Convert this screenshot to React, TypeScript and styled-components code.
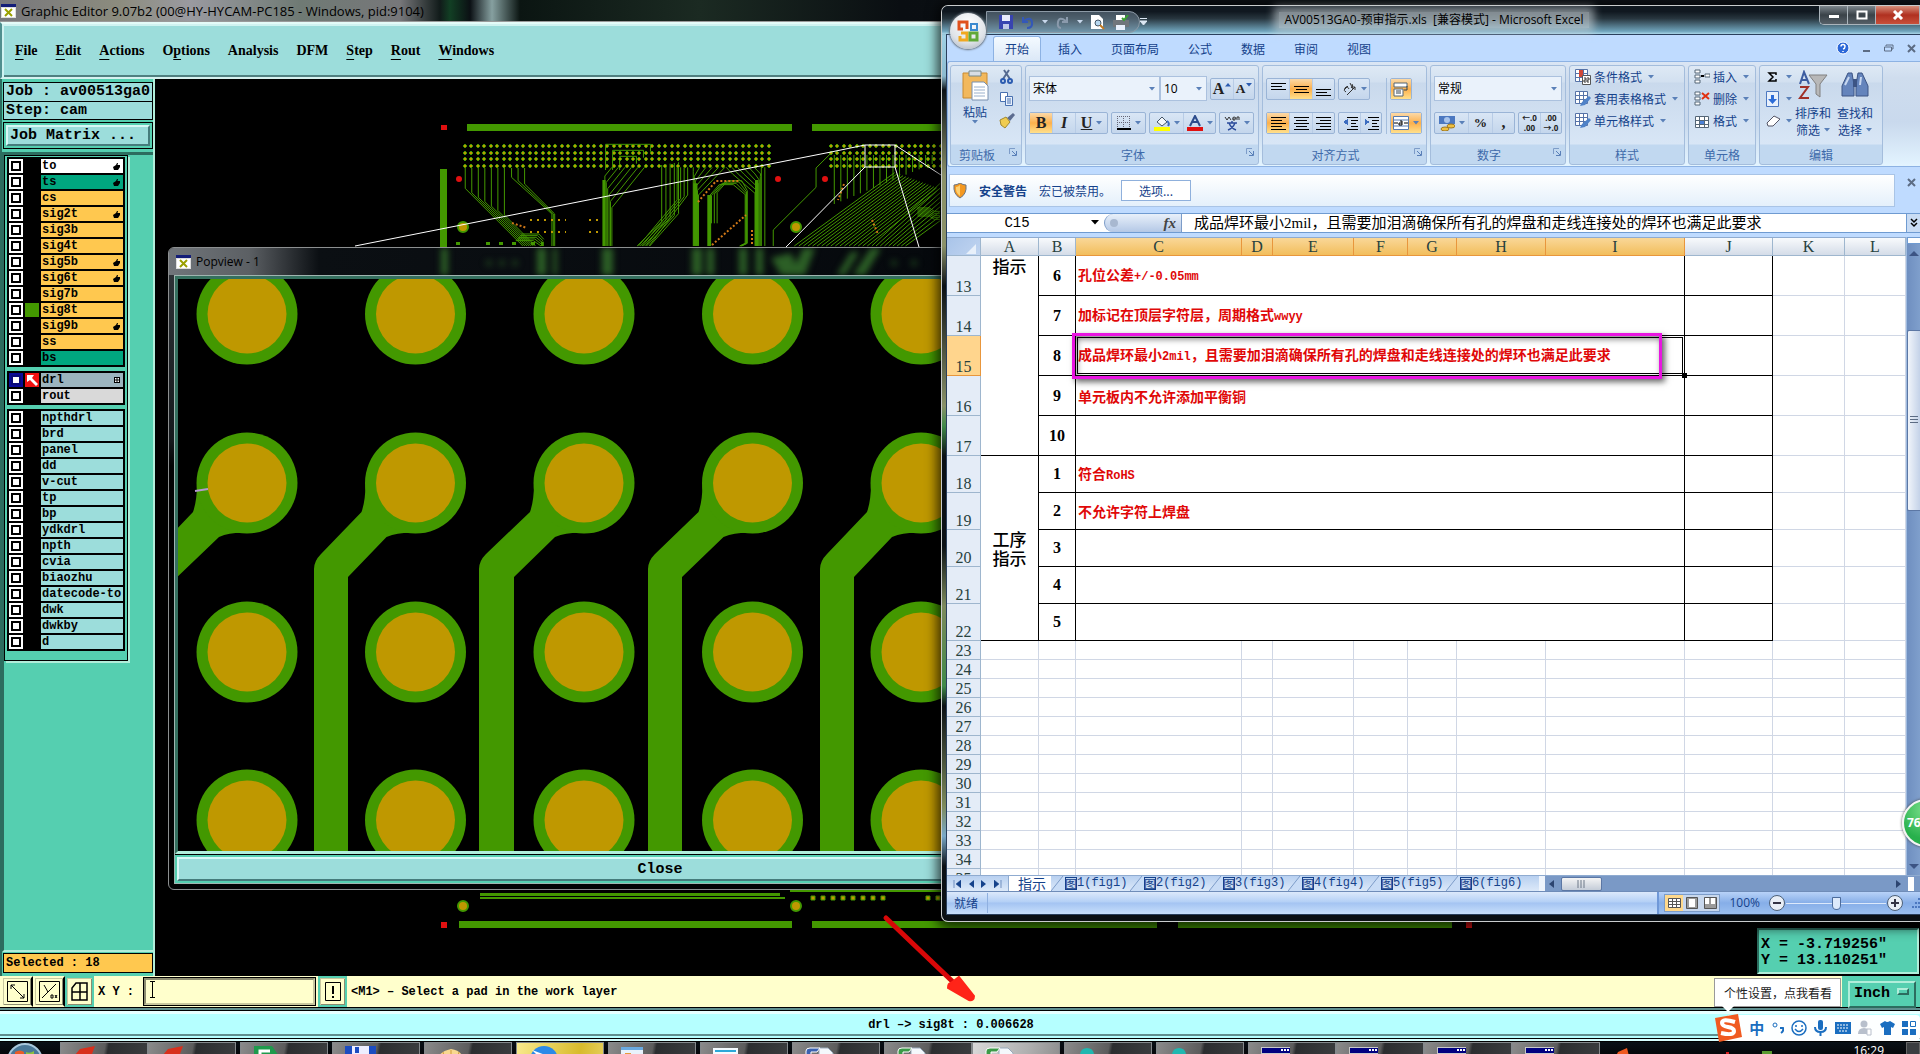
import React from "react";
import styled, { createGlobalStyle, css } from "styled-components";

const cjk = '"Noto Sans CJK SC", sans-serif';
const ui = `"Open Sans", ${cjk}`;
const mono = `"Liberation Mono", ${cjk}`;
const serif = `"Liberation Serif", ${cjk}`;

const green = "#439800";
const gold = "#bf9800";
const teal = "#55cfb0";
const aqua = "#9cdddb";

const Global = createGlobalStyle`
  *, *::before, *::after { box-sizing: border-box; }
  html, body { margin: 0; background: #000; overflow: hidden; }
  button, input, select { font: inherit; color: inherit; margin: 0; padding: 0; border: 0; background: none; border-radius: 0; outline: none; }
  button { display: flex; align-items: center; justify-content: center; }
  svg { display: block; flex: none; }
`;

const Desktop = styled.div`
  position: relative;
  display: flex;
  flex-direction: column;
  height: 100vh;
  overflow: hidden;
  background: #000;
  color: #000;
  font: 12px/16px ${ui};
`;

/* ---------- CAM editor ---------- */

const EditorTitle = styled.header`
  display: flex;
  align-items: center;
  gap: 5px;
  height: 22px;
  padding-left: 1px;
  border-bottom: 1px solid #9a9a9a;
  background: linear-gradient(90deg, #77777c 0, #8c8c7e 120px, #9a9aa0 190px, #6f7a74 300px, #77777a 400px, #111b1a 440px, #123f24 450px, #0b1014 470px, #86a0a0 492px, #0b1512 520px, #1b2a22 700px, #0a0e12 900px, #10151c);
  font-size: 13px;
`;
const MenuBar = styled.nav`
  display: flex;
  align-items: center;
  gap: 18px;
  height: 57px;
  padding-left: 13px;
  border: 2px solid;
  border-color: #e4fbf8 #4f8f8e #d6f2f0 #4f8f8e;
  background: ${aqua};
  box-shadow: inset 2px 2px #d0f3f1, inset 0 -2px #4f8080;
  font: bold 14px/18px ${serif};
  u { text-underline-offset: 4px; text-decoration-thickness: 1px; }
`;
const Workspace = styled.main`
  display: flex;
  flex: 1;
  min-height: 0;
`;
const Side = styled.aside`
  display: flex;
  flex-direction: column;
  width: 155px;
  border-left: 2px solid #2c6d5f;
  border-right: 2px solid #b0eeda;
  background: ${teal};
`;
const JobBox = styled.div`
  margin: 3px 0 0 1px;
  width: 150px;
  border: 1px solid #000;
  background: ${aqua};
  font: bold 15px/17px ${mono};
  white-space: nowrap;
  div { padding-left: 2px; height: 18px; }
  div + div { border-top: 1px solid #000; }
`;
const MatrixFrame = styled.div`
  margin: 2px 0 3px 1px;
  width: 150px;
  padding: 2px;
  border: 1px solid #000;
`;
const MatrixButton = styled.button`
  justify-content: flex-start;
  width: 144px;
  height: 21px;
  padding-left: 2px;
  border: 2px solid;
  border-color: #d8f8f6 #457c7c #457c7c #d8f8f6;
  background: ${aqua};
  font: bold 15px/17px ${mono};
`;
const LayerArea = styled.div`
  flex: 1;
  border-top: 3px solid #2c6d5f;
  border-left: 2px solid #2c6d5f;
  border-bottom: 2px solid #b0eeda;
`;
const LayerPanel = styled.div`
  display: flex;
  flex-direction: column;
  gap: 4px;
  width: 124px;
  padding: 1px 2px 9px 2px;
  border: 1px solid #000;
  box-shadow: 2px 2px #b0eeda;
`;
const LayerGroup = styled.div`
  display: flex;
  flex-direction: column;
  gap: 2px;
  padding: 2px;
  background: #000;
`;
const LayerRow = styled.label`
  display: grid;
  grid-template-columns: 14px 14px 1fr;
  gap: 2px;
  height: 14px;
`;
const Tick = styled.input`
  appearance: none;
  width: 14px;
  height: 14px;
  border: 2px solid #fff;
  background: #fff;
  box-shadow: inset 0 0 0 2px #000;
  &:checked { border-color: #0a0a98; box-shadow: inset 0 0 0 2px #0a0a78; }
`;
const Swatch = styled.span<{ $c?: string }>`
  background: ${(p) => p.$c || "#000"};
`;
const LayerName = styled.span<{ $c: string }>`
  display: flex;
  align-items: center;
  justify-content: space-between;
  padding-left: 1px;
  background: ${(p) => p.$c};
  font: bold 12px/14px ${mono};
  white-space: nowrap;
  svg { margin-right: 3px; }
`;
const Selected = styled.div`
  margin: 1px 0 3px 1px;
  width: 150px;
  height: 20px;
  padding-left: 2px;
  border: 1px solid #000;
  background: #ffc84f;
  font: bold 12px/18px ${mono};
`;
const Canvas = styled.section`
  position: relative;
  flex: 1;
  overflow: hidden;
  background: #000;
`;
const Coords = styled.div`
  position: absolute;
  right: 1px;
  bottom: 2px;
  width: 162px;
  height: 46px;
  padding: 7px 2px;
  border: 2px solid;
  border-color: #2c6d5f #b0eeda #b0eeda #2c6d5f;
  background: ${teal};
  font: bold 15px/16px ${mono};
  white-space: pre;
`;
const CommandBar = styled.div`
  display: flex;
  align-items: stretch;
  height: 32px;
  padding-left: 1px;
  background: #ffffcc;
  border-bottom: 1px solid #000;
  font: bold 12px/32px ${mono};
`;
const ToolButton = styled.button<{ $teal?: boolean }>`
  width: 32px;
  border: 2px solid ${(p) => (p.$teal ? teal : "#ffffcc")};
  border-right: 2px solid #000;
  background: #ffffcc;
  box-shadow: inset 1px 1px #c8c8a0, inset -1px -1px #8c8c70;
  ${(p) => p.$teal && css`border-right-color: ${teal}; width: 29px;`}
`;
const XYLabel = styled.label`
  width: 50px;
  padding-left: 4px;
`;
const XYInput = styled.input`
  width: 171px;
  margin: 2px 3px 2px 0;
  padding-left: 4px;
  border: 2px solid;
  border-color: #8c8c70 #c8c8a0 #c8c8a0 #8c8c70;
  outline: 1px solid #000;
`;
const XYField = styled.span`
  position: relative;
  display: flex;
  svg { position: absolute; left: 5px; top: 5px; }
`;
const Prompt = styled.span`
  flex: 1;
  padding-left: 4px;
`;
const UnitBox = styled.label`
  position: relative;
  width: 78px;
  padding: 2px 4px 2px 6px;
  background: ${teal};
`;
const Unit = styled.select`
  appearance: none;
  width: 68px;
  height: 27px;
  padding-left: 4px;
  border: 2px solid;
  border-color: #b0eeda #2c6d5f #2c6d5f #b0eeda;
  font: bold 15px/20px ${mono};
`;
const UnitMark = styled.i`
  position: absolute;
  right: 11px;
  top: 12px;
  width: 12px;
  height: 7px;
  border: 2px solid;
  border-color: #b0eeda #2c6d5f #2c6d5f #b0eeda;
`;
const StatusLine = styled.div`
  display: flex;
  align-items: center;
  justify-content: center;
  height: 33px;
  margin-bottom: 1px;
  padding-right: 18px;
  border-top: 2px solid #5f8f8f;
  border-bottom: 2px solid #d8ffff;
  background: #b5ffff;
  box-shadow: inset 0 1px #000, inset 0 4px #e6ffff, inset 0 -1px #000, inset 0 -3px #b5ffff, inset 0 -5px #5f8f8f;
  font: bold 12px/16px ${mono};
`;

/* ---------- Taskbar ---------- */

const Taskbar = styled.footer`
  display: flex;
  align-items: flex-start;
  gap: 4px;
  height: 12px;
  overflow: hidden;
  background: linear-gradient(#0a1016, #05070a);
`;
const StartButton = styled.button`
  width: 56px;
  height: 40px;
  align-items: flex-start;
  padding: 1px 6px 0 0;
`;
const TaskGroup = styled.div`
  display: flex;
`;
const Task = styled.button<{ $tone?: string }>`
  width: 88px;
  height: 40px;
  align-items: flex-start;
  justify-content: flex-start;
  padding: 3px 0 0 12px;
  border: 1px solid #85898c;
  background: ${(p) =>
    p.$tone === "yellow" ? "linear-gradient(100deg, #f8e98c, #d8bb2c 70%, #e6d060)"
    : p.$tone === "light" ? "linear-gradient(100deg, #d8d8d8, #b0b0b0 60%, #8c8c8c)"
    : "linear-gradient(100deg, #8a8a8a, #5c5c5c 48%, #2b2d2f 52%, #3c3e40)"};
`;
const Tray = styled.div`
  display: flex;
  flex: 1;
  align-items: flex-start;
  justify-content: flex-end;
  gap: 22px;
  color: #fff;
  font: 12px/16px ${ui};
  time { padding-top: 1px; }
  svg { margin: 6px auto 0 12px; }
`;
const ShowDesktop = styled.button`
  width: 14px;
  height: 40px;
  border: 1px solid #666;
  background: #3a3d40;
`;

/* ---------- Popview window ---------- */

const Popview = styled.section`
  position: absolute;
  left: 168px;
  top: 247px;
  width: 984px;
  height: 643px;
  display: flex;
  flex-direction: column;
  padding: 0 5px 5px;
  border: 1px solid #8c8f90;
  border-radius: 6px 6px 0 6px;
  background: linear-gradient(#30363a, #15191c 30%, #020303 34%);
  overflow: hidden;
`;
const PopTitle = styled.header`
  position: relative;
  display: flex;
  align-items: center;
  gap: 5px;
  height: 27px;
  background: linear-gradient(90deg, #70757a, #5c6064 80px, #0b0f13 150px, #04070b);
  margin: 0 -5px;
  padding-left: 7px;
`;
const PopGlow = styled.svg`
  position: absolute;
  inset: 0;
`;
const PopBody = styled.div`
  display: flex;
  flex: 1;
  flex-direction: column;
  border: 1px solid #9fb5b0;
  min-height: 0;
`;
const PopView = styled.div`
  flex: 1;
  min-height: 0;
  overflow: hidden;
  border: 3px solid;
  border-color: #35705f #b0eeda #b0eeda #35705f;
  background: #000;
`;
const CloseFrame = styled.div`
  padding: 2px;
  border-top: 1px solid #000;
  background: ${teal};
`;
const CloseButton = styled.button`
  width: 100%;
  height: 24px;
  padding-top: 1px;
  border: 2px solid;
  border-color: #d8f8f6 #457c7c #457c7c #d8f8f6;
  background: ${aqua};
  font: bold 15px/18px ${mono};
`;

/* ---------- Excel window ---------- */

const Excel = styled.section`
  position: absolute;
  left: 941px;
  right: 0;
  top: 5px;
  bottom: 132px;
  display: flex;
  flex-direction: column;
  padding: 0 0 6px 4px;
  border: 1px solid #c9cccd;
  border-right: 0;
  border-radius: 7px 0 0 7px;
  background: linear-gradient(#1a232b, #9fd0e4 30px, #8dbbd0 70px, #0b1014 84px, #8b9168 170px, #8b9168 240px, #0b1014 280px, #8a9168 400px, #408a48 420px, #0b1014 450px, #0b1014 540px, #7d8a5c 600px, #408a48 680px, #0b1014 700px, #7d8a5c 800px, #79a9c8 830px, #0b1014 860px);
  box-shadow: 0 2px 12px 4px rgba(0, 0, 0, 0.7);
`;
const XTitle = styled.header`
  position: relative;
  display: flex;
  flex: none;
  justify-content: center;
  height: 28px;
  margin-left: -4px;
  padding: 6px 0 0 6px;
  border-radius: 6px 0 0 0;
  background: linear-gradient(#101820 20%, #28363f 45%, #6fa3bb 90%, #a9d5e8);
  font-size: 12px;
`;
const XTitleText = styled.h1`
  margin: 0;
  height: 16px;
  padding: 0 6px;
  font: 12px/16px ${ui};
  white-space: pre;
  background: rgba(205, 215, 220, 0.6);
  box-shadow: 0 0 8px 5px rgba(205, 215, 220, 0.6);
`;
const Orb = styled.button`
  position: absolute;
  z-index: 2;
  left: 8px;
  top: 7px;
  width: 36px;
  height: 36px;
  border-radius: 50%;
  background: radial-gradient(circle at 50% 30%, #fff, #dfe3e8 60%, #a4adb8);
  box-shadow: 0 0 2px 1px #66707a;
`;
const Quick = styled.div`
  position: absolute;
  left: 44px;
  top: 5px;
  height: 22px;
  display: flex;
  align-items: center;
  gap: 8px;
  padding: 0 10px 0 12px;
  border: 1px solid #8d9aa6;
  border-radius: 0 11px 11px 0;
  background: rgba(110, 130, 145, 0.55);
`;
const QuickMore = styled.button`
  position: absolute;
  left: 198px;
  top: 12px;
`;
const Caption = styled.div`
  position: absolute;
  right: 0;
  top: 0;
  display: flex;
  height: 19px;
  border: 1px solid #aab4bb;
  border-width: 0 0 1px 1px;
  border-radius: 0 0 0 5px;
  overflow: hidden;
`;
const CapButton = styled.button<{ $close?: boolean }>`
  width: ${(p) => (p.$close ? 44 : 28)}px;
  border-right: 1px solid #aab4bb;
  background: ${(p) => (p.$close ? "linear-gradient(#d8907c, #b03020 50%, #c8503a)" : "linear-gradient(#7d868d, #3a4248 50%, #566068)")};
`;
const XBody = styled.div`
  display: flex;
  flex: 1;
  flex-direction: column;
  min-height: 0;
  border: 1px solid #2a3f5c;
  border-right: 0;
  background: #bfdbff;
`;
const Tabs = styled.nav`
  display: flex;
  flex: none;
  align-items: flex-end;
  gap: 5px;
  height: 26px;
  padding: 0 4px 0 46px;
`;
const Tab = styled.button<{ $on?: boolean }>`
  height: 25px;
  padding: 0 12px;
  color: #15428b;
  font: 12px/16px ${cjk};
  ${(p) => p.$on && css`
    border: 1px solid #8db2e3;
    border-bottom: 0;
    border-radius: 3px 3px 0 0;
    padding: 0 11px;
    background: linear-gradient(#f4faff, #dbe8f7);
  `}
`;
const MdiButtons = styled.div`
  display: flex;
  gap: 12px;
  align-items: center;
  height: 26px;
  margin-left: auto;
`;
const Ribbon = styled.div`
  display: flex;
  flex: none;
  gap: 3px;
  height: 106px;
  padding: 3px 2px 2px;
  border: 1px solid #8db2e3;
  border-right: 0;
  border-radius: 3px 0 0 3px;
  background: linear-gradient(#dbe6f4, #cfddee 16px, #c9d9ed 60px, #e3f4ff);
`;
const Group = styled.section<{ $w: number }>`
  display: flex;
  flex: none;
  flex-direction: column;
  width: ${(p) => p.$w}px;
  height: 100px;
  border: 1px solid #a4bddc;
  border-radius: 3px;
  background: linear-gradient(#dee9f5, #d2e0f0 16px, #c9d9ec 17px, #d8e6f6 78px, #c1d8f0 79px);
  color: #15428b;
`;
const GroupMain = styled.div<{ $pad?: string }>`
  display: flex;
  flex: 1;
  padding: ${(p) => p.$pad || "10px 3px 0"};
`;
const GroupName = styled.div<{ $launch?: boolean }>`
  position: relative;
  height: 19px;
  padding-right: ${(p) => (p.$launch ? 18 : 0)}px;
  text-align: center;
  color: #3e6aaa;
  font: 12px/19px ${cjk};
`;
const Launcher = styled.button`
  position: absolute;
  right: 4px;
  top: 3px;
`;
const Col = styled.div<{ $gap?: number }>`
  display: flex;
  flex-direction: column;
  gap: ${(p) => p.$gap ?? 0}px;
`;
const Row = styled.div<{ $gap?: number }>`
  display: flex;
  align-items: center;
  gap: ${(p) => p.$gap ?? 3}px;
`;
const Combo = styled.select<{ $w: number }>`
  appearance: none;
  width: ${(p) => p.$w}px;
  height: 25px;
  padding-left: 3px;
  border: 1px solid #abc1de;
  background: #eaf2fb;
  color: #000;
  font: 12px/16px ${ui};
`;
const ComboBox = styled.label`
  position: relative;
  display: block;
  svg { position: absolute; right: 5px; top: 11px; }
`;
const Segment = styled.div`
  display: flex;
  height: 22px;
  border: 1px solid #9ab4d6;
  border-radius: 2px;
  background: linear-gradient(#d9e6f5, #c4d6ec);
`;
const Seg = styled.button<{ $w: number; $on?: boolean }>`
  width: ${(p) => p.$w}px;
  gap: 4px;
  color: #222;
  font: bold 16px/18px ${serif};
  & + & { border-left: 1px solid #b8cce6; }
  ${(p) => p.$on && css`background: linear-gradient(#fbd9a8, #fcb04c 50%, #ffe08c);`}
`;
const Grower = styled.span`
  display: flex;
  align-items: flex-start;
  gap: 1px;
  svg { margin-top: 3px; }
`;
const Tool = styled.button<{ $h?: number }>`
  justify-content: flex-start;
  gap: 3px;
  height: ${(p) => p.$h ?? 22}px;
  color: #15428b;
  font: 12px/16px ${cjk};
  white-space: nowrap;
  svg + svg { margin-left: 3px; }
`;
const BigTool = styled.button<{ $w: number }>`
  flex-direction: column;
  justify-content: flex-start;
  width: ${(p) => p.$w}px;
  color: #15428b;
  font: 12px/17px ${cjk};
  span { display: flex; align-items: center; gap: 4px; white-space: nowrap; }
`;
const MessageRow = styled.div`
  display: flex;
  flex: none;
  gap: 7px;
  margin: 7px 0 6px 2px;
`;
const MessageBar = styled.div`
  display: flex;
  flex: 1;
  align-items: center;
  height: 33px;
  padding-left: 3px;
  border: 1px solid #a9c4e6;
  background: linear-gradient(#fff, #e4f0fb);
  color: #15428b;
  font: 12px/16px ${cjk};
  strong { margin: 0 12px; }
`;
const OptionsButton = styled.button`
  width: 70px;
  height: 21px;
  margin-left: 10px;
  border: 1px solid #8fb0dc;
  background: #fff;
`;
const CloseX = styled.button`
  width: 18px;
  height: 16px;
`;
const FormulaBar = styled.div`
  display: flex;
  flex: none;
  height: 20px;
  border: 1px solid #6f9bd1;
  border-width: 1px 0;
  background: #fff;
`;
const NameBox = styled.input`
  width: 140px;
  text-align: center;
  font: 14px/18px ${mono};
`;
const FxBox = styled.div`
  display: flex;
  align-items: center;
  justify-content: space-between;
  width: 78px;
  margin-left: 5px;
  padding: 0 5px 0 4px;
  border: 1px solid #7c9cc8;
  border-width: 0 1px 0 1px;
  border-radius: 9px 0 0 9px;
  background: linear-gradient(#e8f0fa, #b4c8e6);
  font: italic bold 15px/16px ${serif};
  color: #444;
`;
const Formula = styled.input`
  flex: 1;
  min-width: 0;
  padding-left: 12px;
  font: 15px/18px ${serif};
`;
const Expand = styled.button`
  width: 14px;
  border-left: 1px solid #6f9bd1;
  background: #c9dcf4;
`;
const SheetRow = styled.div`
  display: flex;
  flex: 1;
  min-height: 0;
  margin-top: 4px;
`;
const SheetView = styled.div`
  flex: 1;
  min-width: 0;
  overflow: hidden;
  background: #fff;
  border-top: 1px solid #8fabd0;
`;
const Sheet = styled.table`
  width: 100%;
  table-layout: fixed;
  border-collapse: separate;
  border-spacing: 0;
  font: 16px/18px ${serif};
  th, td { padding: 0; }
`;
const HeadCell = styled.th<{ $on?: boolean }>`
  height: 18px;
  border-right: 1px solid ${(p) => (p.$on ? "#e8963c" : "#9eb6ce")};
  border-bottom: 1px solid ${(p) => (p.$on ? "#e8963c" : "#9eb6ce")};
  background: ${(p) => (p.$on ? "linear-gradient(#f9d798, #f2be5c)" : "linear-gradient(#f8fafc, #d4dce8)")};
  color: #27413e;
  font-weight: normal;
  line-height: 17px;
`;
const Corner = styled(HeadCell)`
  background: linear-gradient(135deg, #a9c4e9, #c0d4f0);
  svg { margin: 4px 4px 0 auto; }
`;
const RowHead = styled.th<{ $on?: boolean; $h: number }>`
  height: ${(p) => p.$h}px;
  border-right: 1px solid ${(p) => (p.$on ? "#e8963c" : "#9eb6ce")};
  border-bottom: 1px solid ${(p) => (p.$on ? "#e8963c" : "#9eb6ce")};
  background: ${(p) => (p.$on ? "#ffd58d" : "#e4ecf7")};
  color: #27413e;
  font-weight: normal;
  line-height: 17px;
  vertical-align: bottom;
`;
const Cell = styled.td<{ $ink?: boolean }>`
  border-right: 1px solid ${(p) => (p.$ink ? "#000" : "#d0d7e5")};
  border-bottom: 1px solid ${(p) => (p.$ink ? "#000" : "#d0d7e5")};
`;
const Topic = styled(Cell)<{ $top?: boolean }>`
  text-align: center;
  vertical-align: ${(p) => (p.$top ? "top" : "middle")};
  font: 500 17px/19px ${cjk};
`;
const Num = styled(Cell)`
  text-align: center;
  font-weight: bold;
`;
const Note = styled(Cell)<{ $active?: boolean }>`
  position: relative;
  padding-left: 2px !important;
  color: #e00808;
  font: bold 14px/18px ${cjk};
  white-space: nowrap;
  ${(p) => p.$active && css`box-shadow: inset 0 0 0 1px #fff, inset 0 0 0 2px #000;`}
`;
const Latin = styled.span`
  font: bold 12px/18px ${mono};
`;
const Highlight = styled.div`
  position: absolute;
  left: -4px;
  top: -3px;
  right: 22px;
  bottom: -4px;
  border: 3px solid #e815e0;
  box-shadow: 3px 3px 6px rgba(0, 0, 0, 0.6), inset 2px 3px 6px rgba(0, 0, 0, 0.5);
`;
const Handle = styled.i`
  position: absolute;
  right: -3px;
  bottom: -3px;
  width: 5px;
  height: 5px;
  background: #000;
  outline: 1px dotted #fff;
`;
const VScroll = styled.div`
  display: flex;
  flex-direction: column;
  align-items: center;
  width: 14px;
  border-left: 1px solid #9fbbe0;
  background: linear-gradient(90deg, #6f8fc0, #7f9fcc);
`;
const SplitBox = styled.div`
  width: 14px;
  height: 7px;
  margin-bottom: 7px;
  border: 1px solid #6f9bd1;
  background: #fff;
`;
const VThumb = styled.div`
  display: flex;
  align-items: center;
  justify-content: center;
  width: 13px;
  height: 181px;
  margin: 73px 0 auto;
  border: 1px solid #5c77a4;
  border-right: 0;
  border-radius: 2px 0 0 2px;
  background: linear-gradient(90deg, #f0f4fa, #c4d2e8);
`;
const BottomBar = styled.div`
  display: flex;
  flex: none;
  height: 17px;
  border-top: 1px solid #8fabd0;
  border-bottom: 1px solid #6f8cb8;
  background: linear-gradient(#b8d0f0, #dce9f9);
`;
const SheetNav = styled.div`
  display: flex;
  align-items: center;
  justify-content: space-around;
  width: 62px;
  padding: 0 2px;
  border-right: 1px solid #8fabd0;
`;
const ActiveSheet = styled.button`
  width: 42px;
  padding-left: 4px;
  background: #fff;
  color: #15428b;
  font: 14px/15px ${cjk};
`;
const SheetTab = styled.button`
  flex: 1;
  justify-content: flex-start;
  color: #15428b;
  font: 12px/15px ${cjk};
  span { font: 12px/15px ${mono}; }
  b { font-weight: normal; border: 1px solid #15428b; height: 13px; width: 12px; display: flex; align-items: center; justify-content: center; }
`;
const SheetTabBox = styled.div`
  display: flex;
  width: 79px;
  &:last-of-type { width: 64px; }
`;
const HScroll = styled.div`
  display: flex;
  flex: 1;
  align-items: center;
  padding: 0 4px;
  border-left: 6px solid #eef4fc;
  background: #7a99c6;
`;
const HThumb = styled.div`
  display: flex;
  align-items: center;
  justify-content: center;
  width: 41px;
  height: 14px;
  margin: 0 auto 0 6px;
  border: 1px solid #5c77a4;
  border-radius: 2px;
  background: linear-gradient(#f4f4f4, #c4ccd8);
`;
const XStatus = styled.footer`
  display: flex;
  flex: none;
  align-items: center;
  height: 22px;
  background: linear-gradient(#dce9fb, #b4d0f6 45%, #a4c4f2 50%, #c8dffb);
  color: #15428b;
  font: 12px/16px ${cjk};
`;
const Ready = styled.span`
  width: 41px;
  height: 20px;
  padding-left: 7px;
  line-height: 20px;
  border-right: 1px solid #8fb0e0;
  margin-right: auto;
`;
const ViewTools = styled.div`
  display: flex;
  align-items: center;
  height: 22px;
  padding-left: 5px;
  gap: 9px;
  border-left: 2px solid #6f98d8;
  background: linear-gradient(#b8d2f8, #86aee8 50%, #9cc0f0);
  font-family: ${ui};
`;
const Views = styled.div`
  display: flex;
  height: 18px;
  border: 1px solid #7c9cc8;
`;
const ViewButton = styled.button<{ $on?: boolean }>`
  width: 18px;
  background: ${(p) => (p.$on ? "#ffd98c" : "#c8d8ee")};
`;
const Zoom = styled.input`
  appearance: none;
  width: 100px;
  height: 16px;
  background: linear-gradient(#dce9fb, #dce9fb) center / 100% 1px no-repeat;
  &::-webkit-slider-thumb {
    appearance: none;
    width: 9px;
    height: 13px;
    border: 1px solid #4c6c9c;
    border-radius: 1px 1px 5px 5px;
    background: #dce9fb;
  }
`;
const RoundButton = styled.button`
  width: 16px;
  height: 16px;
  border: 1px solid #4c6078;
  border-radius: 50%;
  background: #e8eef6;
`;

/* ---------- Overlays ---------- */

const Ball = styled.div`
  position: absolute;
  right: -30px;
  top: 799px;
  width: 48px;
  height: 48px;
  padding-left: 3px;
  border: 2px solid #f4f4f4;
  border-radius: 50%;
  background: radial-gradient(circle at 50% 20%, #7ce08c, #28b04c 70%);
  box-shadow: 0 0 3px #444;
  color: #fff;
  font: bold 12px/44px ${ui};
`;
const Arrow = styled.svg`
  position: absolute;
  left: 880px;
  top: 910px;
`;
const Tip = styled.div`
  position: absolute;
  right: 79px;
  bottom: 47px;
  width: 127px;
  height: 29px;
  padding-left: 9px;
  border: 1px solid #9a9a9a;
  background: #fff;
  color: #222;
  font: 12px/27px ${cjk};
  &::after {
    content: "";
    position: absolute;
    left: 7px;
    top: 27px;
    border: 6px solid transparent;
    border-top: 6px solid #fff;
    border-bottom: 0;
  }
`;
const Ime = styled.div`
  position: absolute;
  right: 0;
  bottom: 13px;
  display: flex;
  align-items: center;
  justify-content: space-between;
  width: 206px;
  height: 26px;
  padding-right: 4px;
  border-radius: 4px;
  background: linear-gradient(90deg, transparent 14px, #fdffff 14px);
  color: #1a6ec0;
  font: bold 15px/20px ${cjk};
`;

const Caret = ({ c = "#5a80b8" }) => (
  <svg width="6" height="4"><path d="M0 0h6L3 3.5z" fill={c} /></svg>
);
const CaretUp = () => (
  <svg width="6" height="4"><path d="M0 3.500h6L3 0z" fill="#2c5cb0" /></svg>
);
const Dialog = () => (
  <svg width="8" height="8"><path d="M.5 6V.5H6" stroke="#7d9cc8" fill="none" /><path d="M3 3l4 4M7.500 3v4.500H3" stroke="#5a80b8" fill="none" /></svg>
);
const AppIcon = () => (
  <svg width="15" height="14"><path d="M0 0h15v14H0z" fill="#ddd" /><path d="M0 0h15v3H0z" fill="#131d78" /><path d="M1 4h13v9H1z" fill="#fff" /><path d="M4 5l7 7M11 5l-7 7" stroke="#9aa000" strokeWidth="2" /></svg>
);
const Hand = () => (
  <svg width="7" height="8"><path d="M0 5l3-2 1-2h1l-.5 2H7v2L5 8H1z" fill="#000" /></svg>
);
const DrillMark = () => (
  <svg width="6" height="6"><path d="M0 0h6v6H0z" /><path d="M1 1h1.500v1.500H1zM3.500 1H5v1.500H3.500zM1 3.500h1.500V5H1zM3.500 3.500H5V5H3.500z" fill="#fff" /></svg>
);
const Lines = ({ w, y = 2, off = 0 }: { w: number[]; y?: number; off?: 0 | 1 | 2 }) => (
  <svg width="15" height="15" shapeRendering="crispEdges">
    {w.map((n, i) => (
      <path key={i} d={`M${off === 0 ? 0 : off === 1 ? (15 - n) / 2 : 15 - n} ${y + i * 3 + 0.5}h${n}`} stroke="#000" strokeWidth="1.500" />
    ))}
  </svg>
);
const Grid = ({ badge = "#4f82c8" }) => (
  <svg width="16" height="16"><path d="M.5.5h12v12H.5z" fill="#fff" stroke="#5673a8" /><path d="M.5 4.500h12M.5 8.500h12M4.500.5v12M8.500.5v12" stroke="#5673a8" /><path d="M7 11l7-6 2 2-6 7-5 1z" fill={badge} /></svg>
);
const CondGrid = () => (
  <svg width="16" height="16"><path d="M.5.5h12v12H.5z" fill="#fff" stroke="#5673a8" /><path d="M.5 4.500h12M.5 8.500h12M4.500.5v12M8.500.5v12" stroke="#5673a8" /><path d="M4 1h4v7H4z" fill="#d04838" /><path d="M7.500 6.500h8v9h-8z" fill="#fff" stroke="#555" /><path d="M9 9h2v2H9v2h2M12 9h2v2h-2v2h2" stroke="#333" fill="none" /></svg>
);

/* ---------- PCB drawing ---------- */

const range = (n: number) => Array.from({ length: n }, (_, i) => i);

function padGrid(x0: number, x1: number) {
  const out: React.ReactNode[] = [];
  [146, 153, 159, 166].forEach((y) => {
    for (let k = 0; x0 + k * 6.46 <= x1; k++) {
      const x = Math.round(x0 + k * 6.46);
      out.push(<path key={`${x}-${y}`} d={`M${x - 2} ${y - 1}h4v2h-4zM${x - 1} ${y - 2}h2v4h-2z`} fill={green} />);
      out.push(<path key={`g${x}-${y}`} d={`M${x - 1} ${y - 1}h2v2h-2z`} fill={gold} />);
    }
  });
  return out;
}

function traces(): string[] {
  const p: string[] = [];
  range(7).forEach((i) => {
    const x = 186 + 18.6 * i;
    const y = (x + 123 - 6 * i) / 0.95;
    p.push(`M${x} 264V${y}L${x + (498 - y) * 0.95} 498`);
  });
  range(3).forEach((i) => p.push(`M${318 + 18.6 * i} 264V${292 + 10 * i}L${433 + 4 * i} 402V498`));
  range(5).forEach((i) => p.push(`M${330 + i * 4} ${482 - i * 5}h50l${22 - i * 2} 16`));
  range(6).forEach((i) => p.push(`M${604 + 18.6 * i} ${262}L${584 + i * 4} ${288 + i * 19}V498`));
  range(3).forEach((i) => p.push(`M${586 + 20 * i} 270V${193 + 18 * i}H${714 - 20 * i}v22`));
  range(5).forEach((i) => p.push(`M${746 + i * 12} ${255 - i * 2}V${425 - i * 6}L${676 + i * 9} 498`));
  range(4).forEach((i) => p.push(`M${790 + i * 10} 262V${360 - i * 5}L${680 + i * 10} 498`));
  range(6).forEach((i) => p.push(`M${836 + i * 18} 262L${836 + i * 3} ${275 + i * 14}V498`));
  range(6).forEach((i) => p.push(`M${930 + i * 16} 262l${18} ${20}L${1012 + i * 3} ${340 - i * 10}V498`));
  range(4).forEach((i) => p.push(`M${880 + i * 8} 430V${350 - i * 4}l30-36h40l${34 - i * 6} 30V490l-16 8`));
  p.push("M1228 220L1186 264V322L1064 450V498", "M1030 262V498", "M1040 262V498");
  range(16).forEach((i) => p.push(`M${1238 + i * 18.6} 225V${372 - i * 8}`));
  range(17).forEach((i) => p.push(`M${1410 + i * 8} ${278 + i * 3}L${1124 + i * 13} 498`));
  range(9).forEach((i) => p.push(`M1540 ${310 + i * 14}L${1345 + i * 12} 498`));
  range(5).forEach((i) => p.push(`M1475 ${384 + i * 6}h34l14 ${10}h16`));
  return p;
}

const Board = () => (
  <svg width="100%" height="100%">
    <g transform="translate(-155 -79)">
      <g fill={green}>
        <path d="M467 124h325v7H467zM812 124h300v7H812zM440 169h7v700h-7z" />
        <path d="M459 921h333v7H459zM812 921h345v7H812zM1178 921h274v7h-274z" />
        <path d="M480 893h300v3H480zM480 897h305v2H480zM790 890h151v2H790z" />
      </g>
      <g transform="translate(400 80) scale(.3508 .3333)" fill="none" stroke={green}>
        {traces().map((d, i) => <path key={i} d={d} vectorEffect="non-scaling-stroke" />)}
        <path d="M577 300h9v198h-9zM836 310h12v188h-12zM876 345h11v153h-11zM1012 300h10v198h-10zM402 485h8v13h-8z" fill={green} stroke="none" />
      </g>
      {padGrid(465, 772)}
      {padGrid(831, 941)}
      <g stroke="#d07818" strokeWidth="2" strokeDasharray="2 2" fill="none">
        <path d="M698 202l18-21h24M712 245l34-30M512 223l15 5M752 230v16M844 184l-6 16M872 220l6 14" />
        <path d="M530 220h36M530 232h36M589 220h10M589 232h10" stroke={gold} strokeDasharray="2 5" />
      </g>
      <g fill="#e01010">
        <path d="M441 125h6v5h-6zM441 922h6v6h-6zM1466 922h6v6h-6z" />
        <circle cx="459" cy="179" r="3" /><circle cx="778" cy="179" r="3" /><circle cx="825" cy="179" r="3" />
      </g>
      <g fill={gold} stroke={green} strokeWidth="2">
        <circle cx="463" cy="227" r="5" /><circle cx="796" cy="227" r="5" />
        <circle cx="463" cy="906" r="5" /><circle cx="796" cy="906" r="5" />
      </g>
      {[458, 488, 501, 514, 533].map((x) => <path key={x} d={`M${x - 2} 242h4v3h-4z`} fill={green} />)}
      {[812, 822, 832, 842, 852, 862, 872, 882, 927, 937].map((x) => (
        <path key={x} d={`M${x - 1} 896h4v4h-4z`} fill={gold} stroke={green} />
      ))}
      <path d="M355 246L831 152L865 145H895L941 175M865 145V167H895V145M865 167L786 247M895 167L919 247" fill="none" stroke="#fff" />
    </g>
  </svg>
);

const bends = [
  { l: 314, r: 348 }, { l: 479, r: 514 }, { l: 648, r: 682 }, { l: 820, r: 854 }, { l: 988, r: 1022 },
];
const CloseUp = () => (
  <svg width="100%" height="100%">
    <g transform="translate(-178 -278)">
      {bends.map((b, i) => {
        const cx = 247 + 168.5 * (i + 1);
        return (
          <path key={i} fill={green}
            d={`M${b.l} 860V568Q${b.l} 560 ${b.l + 7} 553L${cx - 54} 511Q${cx - 50} 500 ${cx - 50} 482H${cx}V532Q${cx - 16} 531 ${cx - 29} 536L${b.r} 576V860z`} />
        );
      })}
      <path d="M170 535L193 511Q197 500 197 482H247V532Q231 531 219 536L170 583z" fill={green} />
      {[313, 482, 651, 819].map((y) => range(6).map((i) => (
        <g key={`${y}-${i}`}>
          <circle cx={247 + 168.5 * i} cy={y} r="50.500" fill={green} />
          <circle cx={247 + 168.5 * i} cy={y} r="39.500" fill={gold} />
        </g>
      )))}
      <path d="M195 490l13-2" stroke="#b59ad0" strokeWidth="2" />
    </g>
  </svg>
);

/* ---------- Data ---------- */

type Layer = { n: string; c: string; hand?: boolean; sw?: string };
const amber = "#ffc84f";
const layerGroups: Layer[][] = [
  [
    { n: "to", c: "#fff", hand: true }, { n: "ts", c: "#00a67f", hand: true }, { n: "cs", c: amber },
    { n: "sig2t", c: amber, hand: true }, { n: "sig3b", c: amber }, { n: "sig4t", c: amber },
    { n: "sig5b", c: amber, hand: true }, { n: "sig6t", c: amber, hand: true }, { n: "sig7b", c: amber },
    { n: "sig8t", c: amber, sw: green }, { n: "sig9b", c: amber, hand: true }, { n: "ss", c: amber }, { n: "bs", c: "#00a67f" },
  ],
  [{ n: "drl", c: "#9cb4be", sw: "#f01010" }, { n: "rout", c: "#d9d9d9" }],
  ["npthdrl", "brd", "panel", "dd", "v-cut", "tp", "bp", "ydkdrl", "npth", "cvia", "biaozhu", "datecode-to", "dwk", "dwkby", "d"].map((n) => ({ n, c: aqua })),
];

const menus = ["_File", "_Edit", "_Actions", "O_ptions", "Analysis", "DFM", "_Step", "_Rout", "_Windows"];
const columns: [string, number][] = [["A", 58], ["B", 37], ["C", 166], ["D", 31], ["E", 81], ["F", 54], ["G", 49], ["H", 89], ["I", 139], ["J", 88], ["K", 72], ["L", 72]];
const requirement = "成品焊环最小2mil，且需要加泪滴确保所有孔的焊盘和走线连接处的焊环也满足此要求";
const rows: { r: number; h: number; n: string; t: string; topic?: [string, number] }[] = [
  { r: 13, h: 40, n: "6", t: "孔位公差+/-0.05mm", topic: ["指示", 5] },
  { r: 14, h: 40, n: "7", t: "加标记在顶层字符层，周期格式wwyy" },
  { r: 15, h: 40, n: "8", t: requirement },
  { r: 16, h: 40, n: "9", t: "单元板内不允许添加平衡铜" },
  { r: 17, h: 40, n: "10", t: "" },
  { r: 18, h: 37, n: "1", t: "符合RoHS", topic: ["工序\n指示", 5] },
  { r: 19, h: 37, n: "2", t: "不允许字符上焊盘" },
  { r: 20, h: 37, n: "3", t: "" },
  { r: 21, h: 37, n: "4", t: "" },
  { r: 22, h: 37, n: "5", t: "" },
];

const Mixed = ({ text }: { text: string }) => (
  <>{text.split(/([ -~]+)/).map((s, i) => (i % 2 ? <Latin key={i}>{s}</Latin> : s))}</>
);

const DocIcon = ({ c }: { c: string }) => (
  <svg width="30" height="16"><path d="M14 2h9l5 5v9H14z" fill="#f4f8fc" stroke="#9ab" /><path d="M1 14V5q0-3 4-3h10l-3 4H6v8z" fill={c} stroke="#fff" /></svg>
);
const ConsoleIcon = () => (
  <svg width="32" height="14"><path d="M0 1h29v13H0z" fill="#c8c8c8" /><path d="M1 2h28v5H1z" fill="#000080" /><path d="M20 3h2v2h-2zM23 3h2v2h-2zM26 3h2v2h-2z" fill="#fff" /></svg>
);
const RedIcon = () => (
  <svg width="26" height="14"><path d="M2 9l5-6 15-3-3 8-10 1-2 5H0z" fill="#d8301c" /></svg>
);
const FaceIcon = () => (
  <svg width="30" height="14"><path d="M3 8q1-6 7-6t7 6v6H3z" fill="#20b8b0" /><path d="M10 8h18v6H12z" fill="#0c6a80" /></svg>
);

const taskGroups: { tone?: string; icon: React.ReactNode }[][] = [
  [{ icon: <RedIcon /> }, { icon: <RedIcon /> }],
  [{ icon: <svg width="28" height="14"><path d="M1 0h18l7 10v4H1z" fill="#1f9a4c" /><path d="M7 14V5h10" stroke="#fff" strokeWidth="3" fill="none" /></svg> }],
  [{ icon: <svg width="32" height="14"><path d="M0 0h31v14H0z" fill="#1c4cc0" /><path d="M7 0h17v9H7z" fill="#eef" /><path d="M10 1h4v6h-4z" fill="#1c4cc0" /></svg> }],
  [{ icon: <svg width="28" height="14"><path d="M1 14q0-8 13-11 12 2 12 11z" fill="#f8d890" /><path d="M8 14L6 6M14 14V4M20 14l2-8" stroke="#d09838" /></svg> }],
  [{ tone: "yellow", icon: <svg width="32" height="14"><circle cx="15" cy="14" r="14" fill="#2c8ae8" /><path d="M3 4l16 6-6 4z" fill="#fff" /></svg> }],
  [{ icon: <svg width="24" height="14"><path d="M0 1h22v13H0z" fill="#e8f2fc" /><path d="M0 1h22v3H0z" fill="#6aaae0" /><path d="M4 7h6v6H4z" fill="#e89a3c" /></svg> }],
  [{ icon: <svg width="26" height="14"><path d="M0 2h25v12H0z" fill="#f4fbff" /><path d="M2 5h21M2 9h21" stroke="#2ca8d8" strokeWidth="2" /></svg> }],
  [{ icon: <DocIcon c="#3c62b0" /> }],
  [{ icon: <DocIcon c="#3c9a48" /> }, { tone: "light", icon: <DocIcon c="#3c9a48" /> }],
  [{ icon: <FaceIcon /> }],
  [{ icon: <FaceIcon /> }],
  [{ icon: <ConsoleIcon /> }, { icon: <ConsoleIcon /> }, { icon: <ConsoleIcon /> }, { icon: <ConsoleIcon /> }],
];

/* ---------- Views ---------- */

const Wraps = styled.div`
  display: flex;
  flex-direction: column;
  align-items: flex-start;
  gap: 12px;
  height: 56px;
  margin-left: 4px;
  padding-left: 3px;
  border-left: 1px solid #a4bddc;
`;
const Decimals = styled(Seg)`
  font: bold 8px/10px ${ui};
`;
const Finds = styled.div`
  display: flex;
  padding-top: 4px;
`;

function RibbonGroups() {
  return (
    <Ribbon>
      <Group $w={72}>
        <GroupMain $pad="3px 3px 0 8px">
          <BigTool $w={32}>
            <svg width="28" height="34"><path d="M2 4h24v25H2z" fill="#f2b85c" stroke="#c88a30" /><path d="M8 2h12v5H8z" fill="#d8dde4" stroke="#788" /><path d="M11 13h12l4 4v14H11z" fill="#fff" stroke="#7890b0" /><path d="M13 18h11M13 21h11M13 24h11M13 27h11" stroke="#9ab0cc" /></svg>
            <span>粘贴</span>
            <span><Caret /></span>
          </BigTool>
          <Col $gap={6}>
            <Tool aria-label="Cut" $h={16}><svg width="26" height="16"><path d="M13 1l6 9M18 1l-6 9" stroke="#556a90" strokeWidth="2" /><circle cx="12" cy="12" r="2" fill="none" stroke="#2c5cb0" strokeWidth="2" /><circle cx="19" cy="12" r="2" fill="none" stroke="#2c5cb0" strokeWidth="2" /></svg></Tool>
            <Tool aria-label="Copy" $h={16}><svg width="26" height="16"><path d="M9.500 1.500h7v9h-7z" fill="#fff" stroke="#4870b0" /><path d="M14.500 5.500h7v9h-7z" fill="#e8f0fc" stroke="#4870b0" /><path d="M16 8h4M16 10h4M16 12h4" stroke="#4870b0" /></svg></Tool>
            <Tool aria-label="Format painter" $h={16}><svg width="26" height="16"><path d="M16 5l6-5 2 2-5 6z" fill="#5c6c90" /><path d="M9 7l6-3 4 5-5 6-4-3z" fill="#f0cc50" stroke="#a08830" /></svg></Tool>
          </Col>
        </GroupMain>
        <GroupName $launch>剪贴板<Launcher aria-label="Clipboard"><Dialog /></Launcher></GroupName>
      </Group>

      <Group $w={234}>
        <GroupMain>
          <Col $gap={11}>
            <Row>
              <Row $gap={0}>
                <ComboBox><Combo $w={131} aria-label="Font"><option>宋体</option></Combo><Caret /></ComboBox>
                <ComboBox><Combo $w={47} aria-label="Font size"><option>10</option></Combo><Caret /></ComboBox>
              </Row>
              <Segment><Seg $w={22}><Grower>A<CaretUp /></Grower></Seg><Seg $w={21}><Grower><small>A</small><Caret c="#2c5cb0" /></Grower></Seg></Segment>
            </Row>
            <Row>
              <Segment><Seg $w={22} $on>B</Seg><Seg $w={23}><i>I</i></Seg><Seg $w={32}><u>U</u><Caret /></Seg></Segment>
              <Segment><Seg $w={33} aria-label="Borders"><svg width="14" height="14"><path d="M.5 0v12M6.500 0v12M12.500 0v12M0 .5h13M0 6.500h13" stroke="#667" strokeDasharray="1 1" /><path d="M0 13h14" stroke="#000" strokeWidth="2" /></svg><Caret /></Seg></Segment>
              <Segment>
                <Seg $w={33} aria-label="Fill"><svg width="16" height="16"><path d="M3 7l5-5 5 5-5 4z" fill="#f4f8fc" stroke="#456" /><path d="M13 6q3 2 1 5" stroke="#3c6cc0" strokeWidth="2" fill="none" /><path d="M0 12h16v4H0z" fill="#ff0" /></svg><Caret /></Seg>
                <Seg $w={32} aria-label="Font colour"><svg width="16" height="16"><path d="M3 11L8 1l5 10M5 7h6" stroke="#2c4c8c" strokeWidth="2" fill="none" /><path d="M0 12h16v4H0z" fill="#e01010" /></svg><Caret /></Seg>
              </Segment>
              <Segment><Seg $w={33} aria-label="Phonetic"><svg width="16" height="18"><path d="M1 3l2 3 2-3 2 3M9 5h3q0-2-2-2t-1 3h2M13 6V3h2v3" stroke="#333" fill="none" /><path d="M3 9h10M8 7v2M5 9q2 5 7 7M11 9q-2 5-7 7" stroke="#2c4c9c" strokeWidth="1.500" fill="none" /></svg><Caret /></Seg></Segment>
            </Row>
          </Col>
        </GroupMain>
        <GroupName $launch>字体<Launcher aria-label="Font settings"><Dialog /></Launcher></GroupName>
      </Group>

      <Group $w={165}>
        <GroupMain $pad="12px 3px 0">
          <Col $gap={12}>
            <Row>
              <Segment><Seg $w={22} aria-label="Top"><Lines w={[15, 11, 15]} y={1} /></Seg><Seg $w={23} $on aria-label="Middle"><Lines w={[15, 11, 15]} y={4} off={1} /></Seg><Seg $w={22} aria-label="Bottom"><Lines w={[15, 11, 15]} y={7} /></Seg></Segment>
              <Segment><Seg $w={30} aria-label="Orientation"><svg width="15" height="14"><path d="M2 8l4-4M4 10q-3-1-1-4t4 1M8 1l3 6M9 6q3-2 1-4M5 13l8-8M10 5h3v3" stroke="#333" fill="none" /></svg><Caret /></Seg></Segment>
            </Row>
            <Row>
              <Segment><Seg $w={22} $on aria-label="Left"><Lines w={[15, 11, 15, 11, 15]} y={1} /></Seg><Seg $w={23} aria-label="Centre"><Lines w={[15, 11, 15, 11, 15]} y={1} off={1} /></Seg><Seg $w={22} aria-label="Right"><Lines w={[15, 11, 15, 11, 15]} y={1} off={2} /></Seg></Segment>
              <Segment>
                <Seg $w={21} aria-label="Decrease indent"><svg width="16" height="14" shapeRendering="crispEdges"><path d="M5 1h11M9 4h7M9 7h5M9 10h7M5 13h11" stroke="#000" /><path d="M6 3v6L1 6z" fill="#3c6cc0" /></svg></Seg>
                <Seg $w={21} aria-label="Increase indent"><svg width="16" height="14" shapeRendering="crispEdges"><path d="M5 1h11M9 4h7M9 7h5M9 10h7M5 13h11" stroke="#000" /><path d="M2 3v6l5-3z" fill="#3c6cc0" /></svg></Seg>
              </Segment>
            </Row>
          </Col>
          <Wraps>
            <Segment><Seg $w={20} $on aria-label="Wrap text"><svg width="16" height="16"><path d="M1 2h13v4H1zM1 8h9v7H1z" fill="#fff" stroke="#567" /><path d="M14 5v4h-3M3 10h5M3 12h5" stroke="#345" fill="none" /></svg></Seg></Segment>
            <Segment><Seg $w={30} $on aria-label="Merge"><svg width="16" height="14"><path d="M.5.5h15v13H.5z" fill="#fff" stroke="#567ab0" /><path d="M0 4h16M0 10h16" stroke="#567ab0" /><path d="M1 7h4M11 7h4" stroke="#000" /><path d="M7 5h2v4H6V7h3" stroke="#000" fill="none" /></svg><Caret /></Seg></Segment>
          </Wraps>
        </GroupMain>
        <GroupName $launch>对齐方式<Launcher aria-label="Alignment"><Dialog /></Launcher></GroupName>
      </Group>

      <Group $w={136}>
        <GroupMain>
          <Col $gap={11}>
            <ComboBox><Combo $w={128} aria-label="Number format"><option>常规</option></Combo><Caret /></ComboBox>
            <Row>
              <Segment>
                <Seg $w={33} aria-label="Currency"><svg width="16" height="16"><path d="M0 1h16v8H0z" fill="#4c78c0" /><circle cx="8" cy="5" r="3" fill="#a8c4ec" /><ellipse cx="12" cy="11" rx="4" ry="2" fill="#f0c040" stroke="#a07820" /><ellipse cx="6" cy="14" rx="4" ry="2" fill="#f0c040" stroke="#a07820" /></svg><Caret /></Seg>
                <Seg $w={24}><small>%</small></Seg><Seg $w={22}>,</Seg>
              </Segment>
              <Segment>
                <Decimals $w={21}><span>←.0<br />.00</span></Decimals>
                <Decimals $w={21}><span>.00<br />→.0</span></Decimals>
              </Segment>
            </Row>
          </Col>
        </GroupMain>
        <GroupName $launch>数字<Launcher aria-label="Number"><Dialog /></Launcher></GroupName>
      </Group>

      <Group $w={116}>
        <GroupMain $pad="0 5px">
          <Col>
            <Tool><CondGrid />条件格式<Caret /></Tool>
            <Tool><Grid />套用表格格式<Caret /></Tool>
            <Tool><Grid />单元格样式<Caret /></Tool>
          </Col>
        </GroupMain>
        <GroupName>样式</GroupName>
      </Group>

      <Group $w={68}>
        <GroupMain $pad="0 5px">
          <Col>
            <Tool><svg width="16" height="16"><path d="M1 1h5v3H1zM1 6h5v3H1zM1 11h5v3H1zM11 5h5v3h-5z" fill="#fff" stroke="#567" /><path d="M7 7h3" stroke="#000" strokeWidth="2" /></svg>插入<Caret /></Tool>
            <Tool><svg width="16" height="16"><path d="M1 1h5v3H1zM1 6h5v3H1zM1 11h5v3H1z" fill="#fff" stroke="#567" /><path d="M8 2l7 6M15 2L8 8" stroke="#e03010" strokeWidth="2" /></svg>删除<Caret /></Tool>
            <Tool><svg width="16" height="16"><path d="M1.500 3.500h13v11h-13z" fill="#fff" stroke="#567" /><path d="M1 7.500h14M1 11.500h14M5.500 3v12M10.500 3v12" stroke="#567" /><path d="M6 8h4v3H6z" fill="#4c82d8" /></svg>格式<Caret /></Tool>
          </Col>
        </GroupMain>
        <GroupName>单元格</GroupName>
      </Group>

      <Group $w={124}>
        <GroupMain $pad="0 4px 0 6px">
          <Col>
            <Tool aria-label="Sum"><svg width="14" height="10"><path d="M10 3V1H3l4 4-4 4h7V7" fill="none" stroke="#000" strokeWidth="1.500" /></svg><Caret /></Tool>
            <Tool aria-label="Fill"><svg width="14" height="16"><path d="M.5.5h12v15H.5z" fill="#e8f0fc" stroke="#4c78c0" /><path d="M5 4h3v4h3l-4.500 5L2 8h3z" fill="#2c6cd8" /></svg><Caret /></Tool>
            <Tool aria-label="Clear"><svg width="14" height="14"><path d="M1 9l7-7 6 3-7 7-5 0z" fill="#fff" stroke="#556" /></svg><Caret /></Tool>
          </Col>
          <Finds>
            <BigTool $w={42}>
              <svg width="30" height="34"><path d="M2 14L6 2l5 12M4 10h6" stroke="#3c5ca0" strokeWidth="2" fill="none" /><path d="M2 17h8L2 28h9" stroke="#a03028" strokeWidth="2" fill="none" /><path d="M11 5h18l-7 9v13l-4-3V14z" fill="#b8b8b8" stroke="#808080" /></svg>
              <span>排序和</span>
              <span>筛选<Caret /></span>
            </BigTool>
            <BigTool $w={42}>
              <svg width="30" height="34"><path d="M8 3h4l2 12v11H2V16zM18 3h4l6 13v10H16V15z" fill="#6484bc" stroke="#3c5484" /><path d="M13 9h4v8h-4z" fill="#3c5484" /><path d="M5 15l4-8M20 15l1-8" stroke="#c8d8f0" strokeWidth="2" /></svg>
              <span>查找和</span>
              <span>选择<Caret /></span>
            </BigTool>
          </Finds>
        </GroupMain>
        <GroupName>编辑</GroupName>
      </Group>
    </Ribbon>
  );
}

const SheetEdge = () => (
  <svg width="14" height="15"><path d="M0 15L12 0h2v15z" fill="#c8dcf6" /><path d="M0 15L12 0" stroke="#7c9cc8" /></svg>
);

function ExcelWindow() {
  return (
    <Excel>
      <Orb aria-label="Office">
        <svg width="24" height="24" fill="none" strokeWidth="3"><path d="M11 10V3H3v7h4" stroke="#e0501c" /><path d="M15 5h6v6h-6z" stroke="#3c8ad0" strokeWidth="2" /><path d="M5 14h6v7H4v-4" stroke="#f0a820" /><path d="M14 14h7v7h-7z" stroke="#60a838" /></svg>
      </Orb>
      <XTitle>
        <Quick>
          <button aria-label="Save"><svg width="14" height="14"><path d="M0 0h14v14H0z" fill="#3844b0" /><path d="M3 0h8v6H3z" fill="#e8ecfc" /><path d="M4 9h6v5H4z" fill="#c0c8e8" /></svg></button>
          <button aria-label="Undo"><svg width="13" height="13"><path d="M2 1v5h5M3 5q7-5 8 1t-5 6" stroke="#3458b8" strokeWidth="2" fill="none" /></svg></button>
          <Caret c="#c8d8ec" />
          <button aria-label="Redo"><svg width="13" height="13"><path d="M11 1v5H6M10 5Q3 0 2 6t3 6" stroke="#8a9aac" strokeWidth="2" fill="none" /></svg></button>
          <Caret c="#c8d8ec" />
          <button aria-label="Preview"><svg width="14" height="15"><path d="M0 0h8l4 4v10H0z" fill="#fff" /><circle cx="7" cy="8" r="3" fill="#b8d8f0" stroke="#456" /><path d="M9 10l4 4" stroke="#c07820" strokeWidth="2" /></svg></button>
          <button aria-label="Print"><svg width="16" height="15"><path d="M3 0h9v6H3z" fill="#fff" /><path d="M0 5h16v7H0z" fill="#70767c" /><path d="M3 10h9v5H3z" fill="#e8f0fc" /><path d="M9 3l2 2 4-5" stroke="#38a030" strokeWidth="2" fill="none" /></svg></button>
        </Quick>
        <QuickMore aria-label="Customise"><svg width="7" height="8"><path d="M0 .5h7M0 3h7L3.500 7z" stroke="#dce8f4" fill="#dce8f4" /></svg></QuickMore>
        <XTitleText>{"AV00513GA0-预审指示.xls  [兼容模式] - Microsoft Excel"}</XTitleText>
        <Caption>
          <CapButton aria-label="Minimise"><svg width="12" height="8"><path d="M1 4h10v3H1z" fill="#fff" /></svg></CapButton>
          <CapButton aria-label="Maximise"><svg width="12" height="10"><path d="M1.500 1.500h9v7h-9z" stroke="#fff" strokeWidth="2" fill="none" /></svg></CapButton>
          <CapButton $close aria-label="Close"><svg width="12" height="10"><path d="M2 1l8 8M10 1L2 9" stroke="#fff" strokeWidth="3" /></svg></CapButton>
        </Caption>
      </XTitle>
      <XBody>
        <Tabs>
          {["开始", "插入", "页面布局", "公式", "数据", "审阅", "视图"].map((t, i) => <Tab key={t} $on={i === 0}>{t}</Tab>)}
          <MdiButtons>
            <button aria-label="Help"><svg width="14" height="14"><circle cx="7" cy="7" r="6" fill="#2c68d8" stroke="#fff" /><path d="M5 5.500q0-2 2-2t2 2-2 2.500M7 10v1" stroke="#fff" strokeWidth="1.500" fill="none" /></svg></button>
            <button aria-label="Minimise book"><svg width="9" height="9"><path d="M1 7h7" stroke="#5c6c84" strokeWidth="2" /></svg></button>
            <button aria-label="Restore book"><svg width="12" height="9"><path d="M3 2V1h7v4H9M1.500 3h7v4h-7z" stroke="#5c6c84" fill="none" /></svg></button>
            <button aria-label="Close book"><svg width="9" height="9"><path d="M1 1l7 7M8 1L1 8" stroke="#5c6c84" strokeWidth="2" /></svg></button>
          </MdiButtons>
        </Tabs>
        <RibbonGroups />
        <MessageRow>
          <MessageBar>
            <svg width="14" height="16"><path d="M7 0q3 2 6 2 1 9-6 13Q0 11 1 2q3 0 6-2z" fill="#f49820" stroke="#6c7480" /><path d="M7 2v11Q2 9 3 4q2 0 4-2z" fill="#ffd070" /></svg>
            <strong>安全警告</strong>宏已被禁用。
            <OptionsButton>选项...</OptionsButton>
          </MessageBar>
          <CloseX aria-label="Dismiss"><svg width="9" height="9"><path d="M1 1l7 7M8 1L1 8" stroke="#5c6c84" strokeWidth="2" /></svg></CloseX>
        </MessageRow>
        <FormulaBar>
          <NameBox aria-label="Name box" defaultValue="C15" />
          <Tool aria-label="Names" $h={18}><svg width="12" height="6"><path d="M4 0h8L8 4.500z" /></svg></Tool>
          <FxBox><svg width="10" height="10"><circle cx="5" cy="5" r="4" fill="#a8b8d0" /></svg><span>fx</span></FxBox>
          <Formula aria-label="Formula" defaultValue={requirement} />
          <Expand aria-label="Expand"><svg width="8" height="10"><path d="M1 1l3 3 3-3M1 5l3 3 3-3" stroke="#000" strokeWidth="1.500" fill="none" /></svg></Expand>
        </FormulaBar>
        <SheetRow>
          <SheetView>
            <Sheet>
              <colgroup>
                <col width={34} />
                {columns.map(([c, w]) => <col key={c} width={c === "L" ? undefined : w} />)}
              </colgroup>
              <thead>
                <tr>
                  <Corner><svg width="10" height="10"><path d="M10 0v10H0z" fill="#e8f0fa" /></svg></Corner>
                  {columns.map(([c]) => <HeadCell key={c} $on={c >= "C" && c <= "I"}>{c}</HeadCell>)}
                </tr>
              </thead>
              <tbody>
                {rows.map((row) => (
                  <tr key={row.r}>
                    <RowHead $h={row.h} $on={row.r === 15}>{row.r}</RowHead>
                    {row.topic && (
                      <Topic $ink rowSpan={row.topic[1]} $top={row.r === 13}>
                        {row.topic[0].split("\n").map((l) => <div key={l}>{l}</div>)}
                      </Topic>
                    )}
                    <Num $ink>{row.n}</Num>
                    <Note $ink colSpan={7} $active={row.r === 15}>
                      <Mixed text={row.t} />
                      {row.r === 15 && <><Highlight /><Handle /></>}
                    </Note>
                    <Cell $ink />
                    <Cell />
                    <Cell />
                  </tr>
                ))}
                {range(13).map((i) => (
                  <tr key={i}>
                    <RowHead $h={19}>{23 + i}</RowHead>
                    {columns.map(([c]) => <Cell key={c} />)}
                  </tr>
                ))}
              </tbody>
            </Sheet>
          </SheetView>
          <VScroll>
            <SplitBox />
            <svg width="10" height="6"><path d="M5 0l5 5H0z" fill="#3c5484" /></svg>
            <VThumb><svg width="8" height="9"><path d="M0 .5h8M0 3.500h8M0 6.500h8" stroke="#5c6c84" /></svg></VThumb>
            <svg width="10" height="12"><path d="M0 1h10L5 6z" fill="#3c5484" /></svg>
          </VScroll>
        </SheetRow>
        <BottomBar>
          <SheetNav>
            <button aria-label="First"><svg width="8" height="8"><path d="M1 0v8M8 0v8L3 4z" stroke="#15428b" fill="#15428b" strokeWidth=".5" /></svg></button>
            <button aria-label="Previous"><svg width="5" height="8"><path d="M5 0v8L0 4z" fill="#15428b" /></svg></button>
            <button aria-label="Next"><svg width="5" height="8"><path d="M0 0v8l5-4z" fill="#15428b" /></svg></button>
            <button aria-label="Last"><svg width="8" height="8"><path d="M7 0v8M0 0v8l5-4z" stroke="#15428b" fill="#15428b" strokeWidth=".5" /></svg></button>
          </SheetNav>
          <ActiveSheet>指示</ActiveSheet>
          <SheetEdge />
          {range(6).map((i) => (
            <SheetTabBox key={i}>
              <SheetTab><b>图</b><span>{`${i + 1}(fig${i + 1})`}</span></SheetTab>
              {i < 5 && <SheetEdge />}
            </SheetTabBox>
          ))}
          <HScroll>
            <svg width="6" height="8"><path d="M5 0v8L0 4z" fill="#2c4470" /></svg>
            <HThumb><svg width="10" height="8"><path d="M1 0v8M4 0v8M7 0v8" stroke="#6c7888" /></svg></HThumb>
            <svg width="22" height="14"><path d="M2 3v8l5-4z" fill="#2c4470" /><path d="M14 0h6v14h-6z" fill="#fff" /></svg>
          </HScroll>
        </BottomBar>
        <XStatus>
          <Ready>就绪</Ready>
          <ViewTools>
            <Views>
              <ViewButton $on aria-label="Normal"><svg width="13" height="11"><path d="M.5.5h12v9H.5zM0 3.500h13M0 6.500h13M4.500 0v10M8.500 0v10" stroke="#555" fill="#fff" /></svg></ViewButton>
              <ViewButton aria-label="Page layout"><svg width="12" height="12"><path d="M.5.5h11v11H.5z" fill="#9a9a9a" stroke="#555" /><path d="M3 2h6v8H3z" fill="#fff" /></svg></ViewButton>
              <ViewButton aria-label="Page break"><svg width="13" height="12"><path d="M.5.5h12v11H.5z" fill="#9a9a9a" stroke="#555" /><path d="M1 1h4v6H1zM7 1h4v6H7z" fill="#fff" /></svg></ViewButton>
            </Views>
            <span>100%</span>
            <Row $gap={1}>
              <RoundButton aria-label="Zoom out"><svg width="8" height="8"><path d="M0 4h8" stroke="#334" strokeWidth="2" /></svg></RoundButton>
              <Zoom type="range" aria-label="Zoom" min={0} max={100} defaultValue={50} />
              <RoundButton aria-label="Zoom in"><svg width="8" height="8"><path d="M0 4h8M4 0v8" stroke="#334" strokeWidth="2" /></svg></RoundButton>
            </Row>
            <svg width="8" height="10"><path d="M6 0h2v2H6zM3 4h2v2H3zM6 4h2v2H6zM0 8h2v2H0zM3 8h2v2H3zM6 8h2v2H6z" fill="#4c78c0" /></svg>
          </ViewTools>
        </XStatus>
      </XBody>
    </Excel>
  );
}

export default function App() {
  return (
    <Desktop>
      <Global />
      <EditorTitle><AppIcon />Graphic Editor 9.07b2 (00@HY-HYCAM-PC185 - Windows, pid:9104)</EditorTitle>
      <MenuBar>
        {menus.map((m) => {
          const [a, b] = m.split("_");
          return <button key={m}><span>{a}{b && <><u>{b[0]}</u>{b.slice(1)}</>}</span></button>;
        })}
      </MenuBar>
      <Workspace>
        <Side>
          <JobBox><div>Job : av00513ga0</div><div>Step: cam</div></JobBox>
          <MatrixFrame><MatrixButton>Job Matrix ...</MatrixButton></MatrixFrame>
          <LayerArea>
            <LayerPanel>
              {layerGroups.map((g, i) => (
                <LayerGroup key={i}>
                  {g.map((l) => (
                    <LayerRow key={l.n}>
                      <Tick type="checkbox" defaultChecked={l.n === "drl"} />
                      <Swatch $c={l.sw}>
                        {l.n === "drl" && <svg width="14" height="14"><path d="M2 2h7L7 5l6 6-2 2-6-6-3 2z" fill="#fff" /></svg>}
                      </Swatch>
                      <LayerName $c={l.c}>{l.n}{l.hand && <Hand />}{l.n === "drl" && <DrillMark />}</LayerName>
                    </LayerRow>
                  ))}
                </LayerGroup>
              ))}
            </LayerPanel>
          </LayerArea>
          <Selected>Selected : 18</Selected>
        </Side>
        <Canvas>
          <Board />
          <Coords>{'X = -3.719256"\nY = 13.110251"'}</Coords>
        </Canvas>
      </Workspace>
      <CommandBar>
        <ToolButton aria-label="Snap"><svg width="21" height="21" fill="none" stroke="#000"><path d="M.5.5h20v20H.5zM4 4l13 13M4 8V4h4M17 13v4h-4" /></svg></ToolButton>
        <ToolButton aria-label="Angle"><svg width="21" height="21" fill="none" stroke="#000"><path d="M.5.5h20v20H.5zM3 17L17 3M5 4l4 7M12 14h2v3h-2zM16 14l2 3M18 14l-2 3" /></svg></ToolButton>
        <ToolButton $teal aria-label="Grid"><svg width="17" height="19" fill="none" stroke="#000" strokeWidth="1.500"><path d="M5 1h11v17H1V6zM1 10h15M9 1v17" /></svg></ToolButton>
        <XYLabel htmlFor="xy">X Y :</XYLabel>
        <XYField>
          <XYInput id="xy" defaultValue="" />
          <svg width="7" height="17" fill="none" stroke="#000"><path d="M1 .5h5M3.500 1v15M1 16.500h5" /></svg>
        </XYField>
        <ToolButton $teal aria-label="Alert"><svg width="16" height="19" fill="none" stroke="#000"><path d="M.5.5h15v18H.5z" /><path d="M8 4v8M8 14v2" strokeWidth="2" /></svg></ToolButton>
        <Prompt>&lt;M1&gt; – Select a pad in the work layer</Prompt>
        <UnitBox><Unit aria-label="Unit"><option>Inch</option></Unit><UnitMark /></UnitBox>
      </CommandBar>
      <StatusLine>drl –&gt; sig8t : 0.006628</StatusLine>
      <Taskbar>
        <StartButton aria-label="Start"><svg width="36" height="36"><circle cx="18" cy="18" r="17" fill="#4a7898" stroke="#a8c8dc" strokeWidth="2" /><path d="M8 9q5-3 9 0v9H8z" fill="#e85c28" /><path d="M19 9q4 2 8-1v9h-8z" fill="#8cc040" /></svg></StartButton>
        {taskGroups.map((g, i) => (
          <TaskGroup key={i}>
            {g.map((t, j) => <Task key={j} $tone={t.tone} aria-label="Task">{t.icon}</Task>)}
          </TaskGroup>
        ))}
        <Tray>
          <svg width="160" height="8"><path d="M2 4l9-4 2 8H0z" fill="#f05a20" /><path d="M110 4h3v4h-3z" fill="#d82020" /><path d="M146 3h10v5h-10z" fill="#5a9a30" /></svg>
          <time>16:29</time>
          <ShowDesktop aria-label="Show desktop" />
        </Tray>
      </Taskbar>

      <Popview>
        <PopTitle>
          <PopGlow width="984" height="27">
            <g fill="#2c5f26" style={{ filter: "blur(3px)" }} transform="translate(-168 0)">
              <path d="M440 0h7v27h-7zM536 0h9v27h-9zM552 0h4v27h-4zM601 0h11v27h-11zM691 0h10v27h-10zM706 0h7v27h-7zM738 0h8v27h-8zM755 0h7v27h-7zM770 10l20-5 10 22h-20zM802 0h12l-10 27h-14zM850 4h8l-14 23h-8zM870 0h10l-16 27h-12z" />
              <path d="M485 12h6v6h-6zM498 12h6v6h-6zM511 12h6v6h-6zM890 12h6v6h-6zM910 12h6v6h-6z" opacity=".5" />
            </g>
          </PopGlow>
          <AppIcon />Popview - 1
        </PopTitle>
        <PopBody>
          <PopView><CloseUp /></PopView>
          <CloseFrame><CloseButton>Close</CloseButton></CloseFrame>
        </PopBody>
      </Popview>

      <ExcelWindow />

      <Ball>76</Ball>
      <Arrow width="100" height="96">
        <path d="M6 8L72 71" stroke="#d80808" strokeWidth="5" strokeLinecap="round" />
        <path d="M79 67L94 86q0 5-5 4L68 78q0-5 3-5z" fill="#ff2418" stroke="#ff2418" strokeWidth="2" />
      </Arrow>
      <Tip>个性设置，点我看看</Tip>
      <Ime>
        <svg width="28" height="28"><path d="M1 4l23-4 4 23-23 5z" fill="#f05a20" /><path d="M21 8q-13-4-13 1 0 3 6 4t6 4q0 5-13 2" stroke="#fff" strokeWidth="4" fill="none" /></svg>
        <span>中</span>
        <svg width="12" height="12"><circle cx="3" cy="3" r="2" fill="none" stroke="#1a6ec0" /><path d="M8 6h3q1 3-2 5" stroke="#1a6ec0" strokeWidth="2" fill="none" /></svg>
        <svg width="16" height="16" fill="none" stroke="#1a6ec0" strokeWidth="1.500"><circle cx="8" cy="8" r="7" /><path d="M5 5v2M11 5v2M4 9q4 5 8 0" /></svg>
        <svg width="13" height="16" fill="none" stroke="#1a6ec0" strokeWidth="2"><path d="M1 7q0 5 5.500 5T12 7M6.500 12v4" /><rect x="4" y="0" width="5" height="10" rx="2" fill="#1a6ec0" stroke="none" /></svg>
        <svg width="16" height="12"><path d="M0 0h16v12H0z" fill="#1a6ec0" /><path d="M2 3h12M2 6h12M4 9h8" stroke="#fff" strokeDasharray="2 1" /></svg>
        <svg width="14" height="16" fill="#b8c0cc"><circle cx="6" cy="4" r="3.500" /><path d="M0 14q0-6 6-6t6 6z" /><path d="M9 9h4v6H9z" fill="#fff" stroke="#b8c0cc" /></svg>
        <svg width="15" height="14"><path d="M0 3l5-3q2 2 5 0l5 3-2 4-2-1v8H4V6L2 7z" fill="#1a6ec0" /></svg>
        <svg width="14" height="14" fill="#1a6ec0"><path d="M0 0h6v6H0zM0 8h6v6H0zM8 8h6v6H8z" /><path d="M8.500.5h5v5h-5z" fill="none" stroke="#1a6ec0" /></svg>
      </Ime>
    </Desktop>
  );
}
